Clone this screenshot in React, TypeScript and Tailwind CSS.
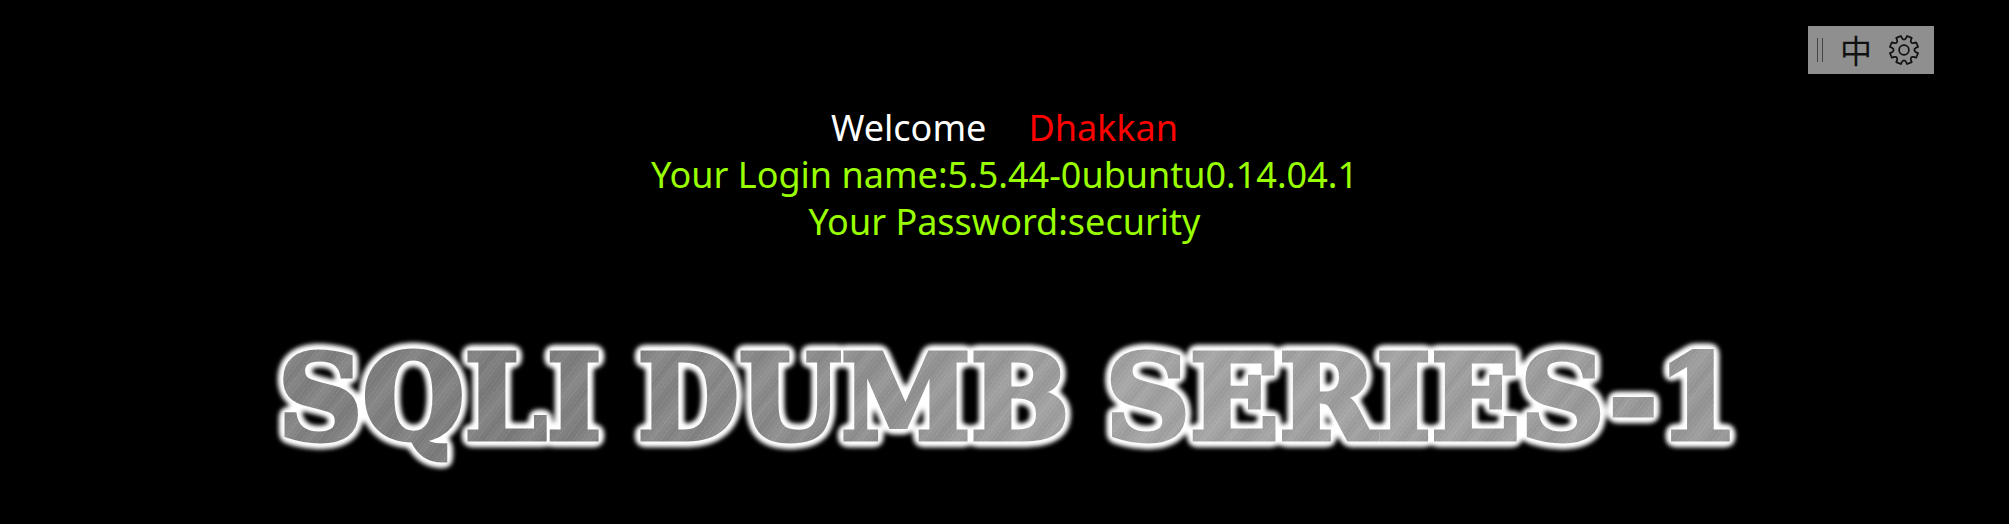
const point = (radius: number, degrees: number) => {
  const a = (degrees * Math.PI) / 180;
  return `${(16 + radius * Math.sin(a)).toFixed(2)} ${(16 - radius * Math.cos(a)).toFixed(2)}`;
};

// Eight teeth, with a rounded notch between each pair.
const gearPath =
  Array.from({ length: 8 }, (_, i) => {
    const c = i * 45 + 22.5;
    return `${i === 0 ? 'M' : 'L'}${point(14.4, c - 10)}L${point(14.4, c + 10)}L${point(11.8, c + 13)}Q${point(9, c + 22.5)} ${point(11.8, c + 32)}`;
  }).join('') + 'Z';

function GearIcon() {
  return (
    <svg viewBox="0 0 32 32" className="size-8" fill="none" stroke="currentColor" strokeWidth="1.7" strokeLinejoin="round" aria-hidden="true">
      <path d={gearPath} />
      <circle cx="16" cy="16" r="4.9" />
    </svg>
  );
}

function InputToolbar() {
  return (
    <div className="absolute top-[26px] right-[75px] flex h-12 w-[126px] items-center bg-[#8f8f8f] pl-[9px] text-[#111]">
      <div className="h-6 w-[6px] border-x border-[#444]" />
      <button
        type="button"
        className="ml-[17px] flex size-8 items-center justify-center pb-0.5 font-['Noto_Sans_CJK_SC',sans-serif] text-[32px] leading-8"
      >
        中
      </button>
      <button type="button" aria-label="Settings" className="ml-4">
        <GearIcon />
      </button>
    </div>
  );
}

const words = ['SQLI', 'DUMB', 'SERIES-1'];

const metal =
  'bg-[repeating-linear-gradient(127deg,rgba(255,255,255,0.07)_0px,rgba(0,0,0,0.03)_2px,rgba(255,255,255,0)_5px,rgba(0,0,0,0.05)_7px),repeating-linear-gradient(130deg,rgba(255,255,255,0.07)_0px,rgba(0,0,0,0.04)_13px,rgba(255,255,255,0.04)_19px,rgba(0,0,0,0.05)_31px,rgba(255,255,255,0.07)_47px),linear-gradient(97deg,#8c8c8c_0%,#808080_25%,#909090_40%,#a8a8a8_55%,#a2a2a2_75%,#949494_100%)]';

function Banner() {
  return (
    <>
      <svg className="absolute size-0" aria-hidden="true">
        <filter id="halo" x="-5%" y="-20%" width="110%" height="140%" colorInterpolationFilters="sRGB">
          <feGaussianBlur in="SourceAlpha" stdDeviation="3.6" result="soft" />
          <feComponentTransfer in="soft" result="strong">
            <feFuncA type="linear" slope="22" intercept="-0.6" />
          </feComponentTransfer>
          <feGaussianBlur in="strong" stdDeviation="2" result="mask" />
          <feFlood floodColor="#ffffff" />
          <feComposite in2="mask" operator="in" result="glow" />
          <feMerge>
            <feMergeNode in="glow" />
            <feMergeNode in="SourceGraphic" />
          </feMerge>
        </filter>
      </svg>
      <h1
        className={`flex justify-center gap-9 bg-clip-text font-['DejaVu_Serif',serif] text-[117px] leading-[140px] font-bold whitespace-nowrap text-transparent [-webkit-text-stroke:5px_transparent] [filter:url(#halo)] ${metal}`}
      >
        {words.map((word) => (
          <span key={word}>{word}</span>
        ))}
      </h1>
    </>
  );
}

export default function App() {
  return (
    <main className="relative min-h-screen overflow-hidden bg-black pt-[104px]">
      <InputToolbar />
      <div className="text-center font-['Noto_Sans',sans-serif] text-[36px] leading-[47px] text-[#99ff00]">
        <p className="flex justify-center gap-[42px] text-white">
          Welcome <span className="text-[#ff0000]">Dhakkan</span>
        </p>
        <p>Your Login name:5.5.44-0ubuntu0.14.04.1</p>
        <p>Your Password:security</p>
      </div>
      <div className="mt-[83px] pl-2">
        <Banner />
      </div>
    </main>
  );
}
